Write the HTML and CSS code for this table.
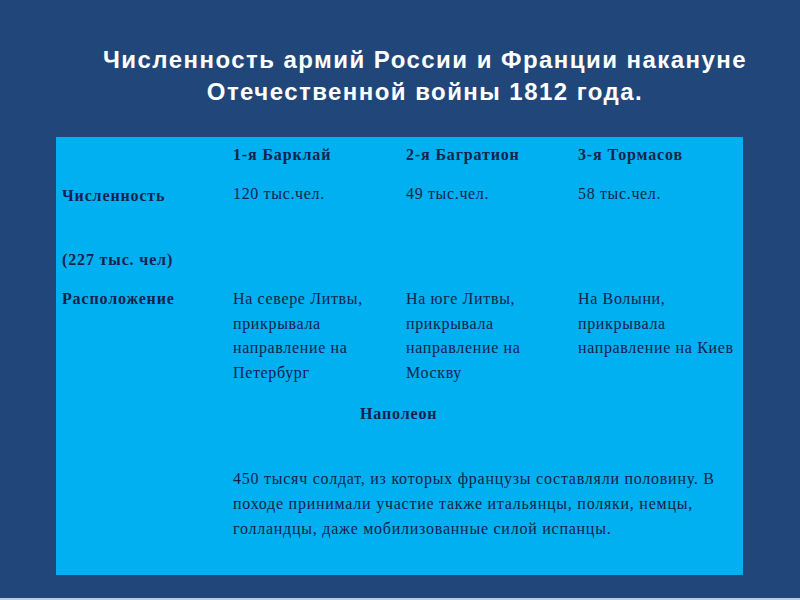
FILE: index.html
```html
<!DOCTYPE html>
<html lang="ru">
<head>
<meta charset="utf-8">
<link rel="stylesheet" href="styles.css">
</head>
<body>
<div class="slide">
  <h1 class="title">Численность армий России и Франции накануне<br>Отечественной войны 1812 года.</h1>
  <div class="box">
    <div class="row head">
      <div></div>
      <div class="b">1-я Барклай</div>
      <div class="b">2-я Багратион</div>
      <div class="b">3-я Тормасов</div>
    </div>
    <div class="row count">
      <div class="b lbl">Численность</div>
      <div>120 тыс.чел.</div>
      <div>49 тыс.чел.</div>
      <div>58 тыс.чел.</div>
    </div>
    <div class="row total">
      <div class="b">(227 тыс. чел)</div>
    </div>
    <div class="row place">
      <div class="b">Расположение</div>
      <div>На севере Литвы,<br>прикрывала<br>направление на<br>Петербург</div>
      <div>На юге Литвы,<br>прикрывала<br>направление на<br>Москву</div>
      <div>На Волыни,<br>прикрывала<br>направление на Киев</div>
    </div>
    <div class="napoleon b">Наполеон</div>
    <p class="para">450 тысяч солдат, из которых французы составляли половину. В походе принимали участие также итальянцы, поляки, немцы, голландцы, даже мобилизованные силой испанцы.</p>
  </div>
</div>
</body>
</html>
```

FILE: styles.css
```css
html, body {
  margin: 0;
  padding: 0;
}
body {
  width: 800px;
  height: 600px;
  overflow: hidden;
  background: #21477a;
}
.slide {
  width: 800px;
  height: 598px;
  border-bottom: 2px solid #b9cde0;
  display: flex;
  flex-direction: column;
  align-items: flex-start;
}
.title {
  margin: 44px 0 0 0;
  padding-left: 50px;
  width: 750px;
  text-align: center;
  color: #ffffff;
  font-family: "Liberation Sans", Arial, sans-serif;
  font-weight: bold;
  font-size: 24px;
  line-height: 32px;
  letter-spacing: 1.45px;
}
.box {
  margin: 29px 0 0 56px;
  width: 681px;
  height: 438px;
  padding: 0 0 0 6px;
  background: #00b0f0;
  color: #13234a;
  font-family: "Liberation Serif", "Times New Roman", serif;
  font-size: 16px;
  letter-spacing: 0.65px;
}
.row {
  display: grid;
  grid-template-columns: 171px 173px 172px 1fr;
}
.b {
  font-weight: bold;
  letter-spacing: 0.85px;
}
.head {
  padding-top: 8px;
  line-height: 20px;
}
.count {
  padding-top: 19px;
  line-height: 20px;
}
.count .lbl {
  padding-top: 2px;
}
.total {
  padding-top: 44px;
  line-height: 20px;
}
.place {
  padding-top: 17px;
  line-height: 24.5px;
}
.napoleon {
  margin-top: 19px;
  line-height: 20px;
  padding-left: 298px;
}
.para {
  margin: 42px 0 0 171px;
  width: 495px;
  line-height: 25px;
  font-size: 16px;
  letter-spacing: 0.75px;
}
```
